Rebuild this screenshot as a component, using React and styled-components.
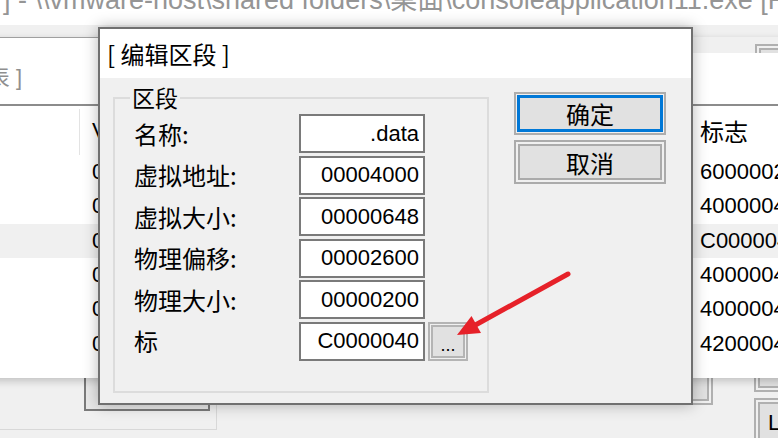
import React from 'react';
import styled, { createGlobalStyle } from 'styled-components';

const GlobalStyle = createGlobalStyle`
  html, body {
    margin: 0;
    padding: 0;
    background: #f0f0f0;
  }
  body {
    font-family: "Liberation Sans", "Noto Sans CJK SC", sans-serif;
  }
`;

const CJK = `"Noto Sans CJK SC", "Liberation Sans", sans-serif`;

const sections = [
  { off: '00001000', flags: '60000020' },
  { off: '00002000', flags: '40000040' },
  { off: '00003000', flags: 'C0000040', selected: true },
  { off: '00004000', flags: '40000040' },
  { off: '00005000', flags: '40000040' },
  { off: '00006000', flags: '42000040' },
];

const fields = [
  { label: '名称:', value: '.data' },
  { label: '虚拟地址:', value: '00004000' },
  { label: '虚拟大小:', value: '00000648' },
  { label: '物理偏移:', value: '00002600' },
  { label: '物理大小:', value: '00000200' },
  { label: '标', value: 'C0000040', picker: true },
];

const Desktop = styled.div`
  position: relative;
  width: 778px;
  height: 438px;
  overflow: hidden;
  background: #f0f0f0;
`;

/* main window (behind everything) */
const MainWindow = styled.div`
  display: flex;
  flex-direction: column;
  height: 100%;
`;

const MainTitle = styled.div`
  flex: none;
  height: 25px;
  padding-left: 3px;
  background: #fff;
  color: #959595;
  font-size: 27px;
  line-height: 0;
  white-space: nowrap;
  overflow: hidden;
`;

const MainClient = styled.div`
  flex: 1;
  display: flex;
  flex-direction: column;
  justify-content: space-between;
`;

const TopRow = styled.div`
  display: flex;
  justify-content: flex-end;
  padding-top: 19px;
`;

const GhostButton = styled.div`
  flex: none;
  box-sizing: border-box;
  width: ${(p) => p.$w}px;
  height: ${(p) => p.$h}px;
  border: 6px double #b0b0b0;
  background: #e1e1e1;
  background-clip: padding-box;
  color: #000;
  font-size: 22px;
  line-height: ${(p) => p.$h - 12}px;
  padding-left: 8px;
  margin-left: ${(p) => p.$ml || 0}px;
  margin-right: ${(p) => p.$mr || 0}px;
`;

const BottomRow = styled.div`
  display: flex;
  align-items: flex-start;
  height: 83px;
`;

const LeftFrame = styled.div`
  flex: none;
  box-sizing: border-box;
  margin-left: -10px;
  width: 227px;
  height: 75px;
  border: 1px solid #d8d8d8;
  display: flex;
  justify-content: flex-end;
  align-items: flex-end;
  padding: 0 6px 18px 0;
`;

const DarkButton = styled.div`
  flex: none;
  box-sizing: border-box;
  width: 126px;
  height: 56px;
  border: 2px solid #7a7a7a;
  background: #e8e8e8;
`;

const RightStack = styled.div`
  flex: none;
  display: flex;
  flex-direction: column;
  gap: 6px;
  margin-left: 41px;
`;

/* section table window */
const TableWindow = styled.div`
  position: absolute;
  left: -100px;
  top: 37px;
  width: 1000px;
  height: 341px;
  display: flex;
  flex-direction: column;
  box-shadow: 0 3px 8px rgba(0, 0, 0, 0.2);
`;

const TableTitle = styled.div`
  box-sizing: border-box;
  height: 69px;
  display: flex;
  align-items: flex-end;
  border-bottom: 2px solid #8c8c8c;
`;

const TitleLeft = styled.div`
  box-sizing: border-box;
  width: 400px;
  height: 67px;
  background: #fff;
  border-top: 1px solid #a0a0a0;
  padding-top: 28px;
`;

const TitleCaption = styled.div`
  width: 122px;
  text-align: right;
  white-space: nowrap;
  color: #8f8f8f;
  font-size: 22px;
  line-height: 24px;
`;

const TitleRight = styled.div`
  flex: 1;
  height: 51px;
  background: #fff;
`;

const ListPane = styled.div`
  flex: 1;
  background: #fff;
`;

const ListRow = styled.div`
  display: grid;
  grid-template-columns: 180px 612px 1fr;
  height: ${(p) => (p.$header ? 49 : 34.3)}px;
  align-items: center;
  background: ${(p) => (p.$selected ? '#f0f0f0' : '#fff')};
  font-size: 22px;
  color: #000;
  white-space: nowrap;
`;

const FirstCell = styled.div`
  align-self: stretch;
  margin-top: ${(p) => (p.$header ? 3 : 0)}px;
  border-right: 1px solid ${(p) => (p.$header ? '#e3e3e3' : 'transparent')};
`;

const Cell = styled.div`
  overflow: hidden;
  padding-left: ${(p) => p.$pl || 12}px;
  font-family: ${(p) => (p.$cjk ? CJK : 'inherit')};
  font-size: ${(p) => (p.$cjk ? 24 : 22)}px;
`;

/* edit section dialog */
const Dialog = styled.div`
  position: absolute;
  left: 98px;
  top: 27px;
  width: 595px;
  height: 378px;
  box-sizing: border-box;
  border: 2px solid #707070;
  background: #f0f0f0;
  display: flex;
  flex-direction: column;
  box-shadow: 0 0 14px rgba(0, 0, 0, 0.28);
`;

const DialogTitle = styled.div`
  flex: none;
  height: 49px;
  background: #fff;
  display: flex;
  align-items: center;
  padding-left: 7px;
  font-family: ${CJK};
  font-size: 24px;
  color: #000;
`;

const DialogBody = styled.div`
  flex: 1;
  display: flex;
  align-items: flex-start;
  padding: 19px 0 0 13px;
`;

const GroupBox = styled.div`
  flex: none;
  position: relative;
  box-sizing: border-box;
  width: 376px;
  height: 296px;
  border: 2px solid #dcdcdc;
  padding: 15px 0 0 19px;
`;

const Legend = styled.span`
  position: absolute;
  left: 15px;
  top: -14px;
  padding: 0 2px;
  background: #f0f0f0;
  font-family: ${CJK};
  font-size: 23px;
  line-height: 24px;
  color: #000;
`;

const FieldGrid = styled.div`
  display: grid;
  grid-template-columns: 162px 126px 40px;
  row-gap: 2.5px;
  column-gap: 3px;
  align-items: center;
`;

const FieldLabel = styled.label`
  font-family: ${CJK};
  font-size: 24px;
  line-height: 26px;
  color: #000;
`;

const FieldInput = styled.input`
  box-sizing: border-box;
  width: 126px;
  height: 39px;
  margin: 0;
  border: 2px solid #7a7a7a;
  background: #fff;
  padding: 0 4px 0 0;
  text-align: right;
  font-family: "Liberation Sans", sans-serif;
  font-size: 22px;
  color: #000;
  outline: none;
`;

const DotsButton = styled.div`
  box-sizing: border-box;
  width: 40px;
  height: 39px;
  border: 5px double #b4b4b4;
  background: #e1e1e1;
  background-clip: padding-box;
  display: flex;
  justify-content: center;
  align-items: flex-end;
  font-size: 18px;
  line-height: 22px;
  color: #000;
`;

const ButtonColumn = styled.div`
  flex: none;
  display: flex;
  flex-direction: column;
  gap: 5px;
  margin: -5px 0 0 25px;
`;

const DialogButton = styled.div`
  box-sizing: border-box;
  width: 152px;
  height: ${(p) => (p.$default ? 43 : 44)}px;
  display: flex;
  justify-content: center;
  align-items: center;
  font-family: ${CJK};
  font-size: 24px;
  color: #000;
  background: #e1e1e1;
  background-clip: padding-box;
  border: ${(p) => (p.$default ? '2px solid #adadad' : '6px double #ababab')};
  box-shadow: ${(p) =>
    p.$default ? 'inset 0 0 0 1px #f0f0f0, inset 0 0 0 4px #0078d7' : 'none'};
`;

const Overlay = styled.svg`
  position: absolute;
  left: 0;
  top: 0;
  pointer-events: none;
`;

export default function App() {
  return (
    <>
      <GlobalStyle />
      <Desktop>
        <MainWindow>
          <MainTitle>] - \\vmware-host\shared folders\桌面\consoleapplication11.exe [PE Editor]</MainTitle>
          <MainClient>
            <TopRow>
              <GhostButton $w={40} $h={30} $mr={-17} />
            </TopRow>
            <BottomRow>
              <LeftFrame>
                <DarkButton />
              </LeftFrame>
              <GhostButton $w={113} $h={50} $ml={383} />
              <RightStack>
                <GhostButton $w={40} $h={37} />
                <GhostButton $w={40} $h={50}>L</GhostButton>
              </RightStack>
            </BottomRow>
          </MainClient>
        </MainWindow>

        <TableWindow>
          <TableTitle>
            <TitleLeft>
              <TitleCaption>[ 区段表 ]</TitleCaption>
            </TitleLeft>
            <TitleRight />
          </TableTitle>
          <ListPane>
            <ListRow $header>
              <FirstCell $header />
              <Cell>VOffset</Cell>
              <Cell $pl={8} $cjk>标志</Cell>
            </ListRow>
            {sections.map((s) => (
              <ListRow key={s.off} $selected={s.selected}>
                <FirstCell />
                <Cell>{s.off}</Cell>
                <Cell $pl={8}>{s.flags}</Cell>
              </ListRow>
            ))}
          </ListPane>
        </TableWindow>

        <Dialog>
          <DialogTitle>[ 编辑区段 ]</DialogTitle>
          <DialogBody>
            <GroupBox>
              <Legend>区段</Legend>
              <FieldGrid>
                {fields.map((f) => (
                  <React.Fragment key={f.label}>
                    <FieldLabel>{f.label}</FieldLabel>
                    <FieldInput readOnly value={f.value} />
                    {f.picker ? <DotsButton>...</DotsButton> : <span />}
                  </React.Fragment>
                ))}
              </FieldGrid>
            </GroupBox>
            <ButtonColumn>
              <DialogButton $default>确定</DialogButton>
              <DialogButton>取消</DialogButton>
            </ButtonColumn>
          </DialogBody>
        </Dialog>

        <Overlay width="778" height="438" viewBox="0 0 778 438">
          <line x1="568" y1="274" x2="470" y2="328" stroke="#e62129" strokeWidth="5" strokeLinecap="round" />
          <polygon points="457,335 471.5,316 481,333" fill="#e62129" />
        </Overlay>
      </Desktop>
    </>
  );
}
